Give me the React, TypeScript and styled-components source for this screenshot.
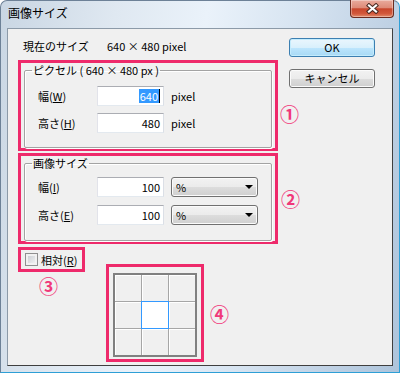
import styled, { createGlobalStyle } from "styled-components";

const GlobalStyle = createGlobalStyle`
  html, body {
    margin: 0;
    padding: 0;
  }
  body {
    font-family: "Noto Sans CJK JP", "Noto Sans", sans-serif;
    font-size: 11px;
    color: #000;
    background: #fff;
  }
`;

const Window = styled.div`
  box-sizing: border-box;
  width: 400px;
  height: 373px;
  display: flex;
  flex-direction: column;
  padding: 0 6px 6px 6px;
  border: 1px solid;
  border-color: #6d8197 #2e9fd6 #2e9fd6 #6d8197;
  border-radius: 7px 7px 0 0;
  background: linear-gradient(
    100deg,
    #c9d6e3 0%,
    #dfe8f1 25%,
    #eaf2fa 45%,
    #d7e4f1 65%,
    #bfd1e4 85%,
    #adc4db 100%
  );
`;

const TitleBar = styled.div`
  height: 27px;
  display: flex;
  justify-content: space-between;
  align-items: flex-start;
`;

const Title = styled.span`
  font-size: 12px;
  line-height: 14px;
  margin-top: 5px;
  padding-left: 1px;
`;

const CloseButton = styled.div`
  box-sizing: border-box;
  width: 44px;
  height: 18px;
  margin: -1px -1px 0 0;
  display: flex;
  align-items: center;
  justify-content: center;
  border: 1px solid #6b2b1f;
  border-top: none;
  border-radius: 0 0 4px 4px;
  background: linear-gradient(
    #e9ab9d 0%,
    #de8b78 45%,
    #c8462c 52%,
    #d2583b 80%,
    #e28c6c 100%
  );
  box-shadow: inset 0 0 0 1px rgba(255, 255, 255, 0.35);
`;

const Client = styled.div`
  flex: 1;
  display: flex;
  background: #f0f0f0;
  border: 1px solid;
  border-color: #8c9aa8 #3f3f3f #3f3f3f #8c9aa8;
`;

const LeftColumn = styled.div`
  display: flex;
  flex-direction: column;
  padding: 10px 0 0 10px;
  width: 260px;
`;

const RightColumn = styled.div`
  display: flex;
  flex-direction: column;
  gap: 12px;
  padding-top: 9px;
  margin-left: 11px;
`;

const InfoRow = styled.div`
  display: flex;
  height: 14px;
  line-height: 14px;
  padding-left: 5px;
`;

const InfoLabel = styled.span`
  width: 84px;
`;

const Annot = styled.div<{ $w: number; $h: number }>`
  position: relative;
  box-sizing: border-box;
  width: ${(p) => p.$w}px;
  height: ${(p) => p.$h}px;
  border: 3px solid #ee2a6b;
  display: flex;
  flex-direction: column;
`;

const GroupAnnot = styled(Annot)`
  padding: 0 3px;
`;

const Marker = styled.span<{ $x: number; $y: number }>`
  position: absolute;
  left: ${(p) => p.$x}px;
  top: ${(p) => p.$y}px;
  font-size: 19px;
  line-height: 19px;
  font-weight: 700;
  color: #f0387a;
`;

const Group = styled.fieldset<{ $top: number; $gap: number }>`
  flex: 1;
  margin: 0;
  min-width: 0;
  padding: ${(p) => p.$top}px 4px 0 5px;
  border: 1px solid #a3a3a3;
  border-radius: 2px;
  box-shadow: inset 1px 1px 0 #fff, 1px 1px 0 #fff;
  display: flex;
  flex-direction: column;
  gap: ${(p) => p.$gap}px;
`;

const Legend = styled.legend`
  margin-left: 2px;
  padding: 0 1px;
  line-height: 14px;
  font-size: 11px;
`;

const FieldRow = styled.div`
  display: flex;
  align-items: center;
  height: 20px;
  margin-left: 8px;
`;

const FieldLabel = styled.span`
  width: 59px;
  line-height: 14px;
`;

const TextBox = styled.div`
  box-sizing: border-box;
  width: 67px;
  height: 20px;
  background: #fff;
  border: 1px solid;
  border-color: #abadb3 #dbdfe6 #e3e9ef #e2e3ea;
  display: flex;
  align-items: center;
  justify-content: flex-end;
  padding-right: 3px;
  line-height: 14px;
`;

const Selected = styled.span`
  background: #3399ff;
  color: #fff;
  padding: 0 1px;
`;

const Caret = styled.span`
  width: 1px;
  height: 14px;
  background: #000;
`;

const Unit = styled.span`
  margin-left: 7px;
  line-height: 14px;
`;

const Combo = styled.div`
  box-sizing: border-box;
  width: 87px;
  height: 20px;
  margin-left: 7px;
  border: 1px solid #707070;
  border-radius: 3px;
  background: linear-gradient(#f2f2f2 0%, #ebebeb 50%, #dddddd 50%, #cfcfcf 100%);
  box-shadow: inset 0 0 0 1px #fbfbfb;
  display: flex;
  align-items: center;
  justify-content: space-between;
  padding: 0 4px 0 4px;
  line-height: 14px;
`;

const DropArrow = styled.span`
  width: 0;
  height: 0;
  border-left: 4px solid transparent;
  border-right: 4px solid transparent;
  border-top: 4px solid #000;
`;

const BottomArea = styled.div`
  display: flex;
  align-items: flex-start;
  margin-top: 3px;
`;

const CheckAnnot = styled(Annot)`
  flex-direction: row;
  align-items: center;
  padding-left: 4px;
`;

const CheckBox = styled.span`
  box-sizing: border-box;
  width: 13px;
  height: 13px;
  border: 1px solid #8f8f8f;
  background: linear-gradient(135deg, #c4c8ce, #f7f7f7);
  box-shadow: inset 0 0 0 2px #f1f1f1;
`;

const CheckLabel = styled.span`
  margin-left: 3px;
  line-height: 14px;
`;

const AnchorAnnot = styled(Annot)`
  margin: 17px 0 0 21px;
  padding: 6px 0 0 4px;
  align-items: flex-start;
`;

const AnchorGrid = styled.div`
  display: grid;
  grid-template-columns: repeat(3, 26px);
  grid-template-rows: repeat(3, 26px);
  gap: 1px;
  background: #a6a6a6;
  border: 2px solid #808080;
`;

const Cell = styled.div<{ $active?: boolean }>`
  background: ${(p) => (p.$active ? "#fff" : "#f0f0f0")};
  box-shadow: ${(p) => (p.$active ? "none" : "inset 1px 1px 0 #fff")};
  outline: ${(p) => (p.$active ? "1px solid #3399ff" : "none")};
`;

const Button = styled.button<{ $default?: boolean }>`
  box-sizing: border-box;
  width: 86px;
  height: 19px;
  margin: 0;
  padding: 0;
  font: inherit;
  font-size: 11px;
  line-height: 1;
  color: #000;
  border: 1px solid ${(p) => (p.$default ? "#3c7fb1" : "#707070")};
  border-radius: 3px;
  background: ${(p) =>
    p.$default
      ? "linear-gradient(#eaf6fd 0%, #d9f0fc 50%, #bee6fd 50%, #a7d9f5 100%)"
      : "linear-gradient(#f2f2f2 0%, #ebebeb 50%, #dddddd 50%, #cfcfcf 100%)"};
  box-shadow: inset 0 0 0 1px ${(p) => (p.$default ? "#c4ecfd" : "#fbfbfb")};
`;

const cells = [0, 1, 2, 3, 4, 5, 6, 7, 8];

export default function App() {
  return (
    <>
      <GlobalStyle />
      <Window>
        <TitleBar>
          <Title>画像サイズ</Title>
          <CloseButton>
            <svg width="13" height="11" viewBox="0 0 13 11">
              <path
                d="M3 2.5 L10 8.5 M10 2.5 L3 8.5"
                stroke="#4a2a22"
                strokeWidth="4.2"
                strokeLinecap="square"
              />
              <path
                d="M3 2.5 L10 8.5 M10 2.5 L3 8.5"
                stroke="#fff"
                strokeWidth="2.2"
                strokeLinecap="square"
              />
            </svg>
          </CloseButton>
        </TitleBar>
        <Client>
          <LeftColumn>
            <InfoRow>
              <InfoLabel>現在のサイズ</InfoLabel>
              <span>640 × 480 pixel</span>
            </InfoRow>

            <GroupAnnot $w={260} $h={91} style={{ marginTop: 7 }}>
              <Group $top={9} $gap={7}>
                <Legend>ピクセル ( 640 × 480 px )</Legend>
                <FieldRow>
                  <FieldLabel>
                    幅(<u>W</u>)
                  </FieldLabel>
                  <TextBox>
                    <Selected>640</Selected>
                    <Caret />
                  </TextBox>
                  <Unit>pixel</Unit>
                </FieldRow>
                <FieldRow>
                  <FieldLabel>
                    高さ(<u>H</u>)
                  </FieldLabel>
                  <TextBox>480</TextBox>
                  <Unit>pixel</Unit>
                </FieldRow>
              </Group>
              <Marker $x={259} $y={41}>①</Marker>
            </GroupAnnot>

            <GroupAnnot $w={260} $h={91} style={{ marginTop: 2 }}>
              <Group $top={7} $gap={8}>
                <Legend>画像サイズ</Legend>
                <FieldRow>
                  <FieldLabel>
                    幅(<u>I</u>)
                  </FieldLabel>
                  <TextBox>100</TextBox>
                  <Combo>
                    <span>%</span>
                    <DropArrow />
                  </Combo>
                </FieldRow>
                <FieldRow>
                  <FieldLabel>
                    高さ(<u>E</u>)
                  </FieldLabel>
                  <TextBox>100</TextBox>
                  <Combo>
                    <span>%</span>
                    <DropArrow />
                  </Combo>
                </FieldRow>
              </Group>
              <Marker $x={260} $y={33}>②</Marker>
            </GroupAnnot>

            <BottomArea>
              <CheckAnnot $w={67} $h={25}>
                <CheckBox />
                <CheckLabel>
                  相対(<u>R</u>)
                </CheckLabel>
                <Marker $x={18} $y={26}>③</Marker>
              </CheckAnnot>
              <AnchorAnnot $w={98} $h={98}>
                <AnchorGrid>
                  {cells.map((c) => (
                    <Cell key={c} $active={c === 4} />
                  ))}
                </AnchorGrid>
                <Marker $x={101} $y={37}>④</Marker>
              </AnchorAnnot>
            </BottomArea>
          </LeftColumn>

          <RightColumn>
            <Button $default>OK</Button>
            <Button>キャンセル</Button>
          </RightColumn>
        </Client>
      </Window>
    </>
  );
}
